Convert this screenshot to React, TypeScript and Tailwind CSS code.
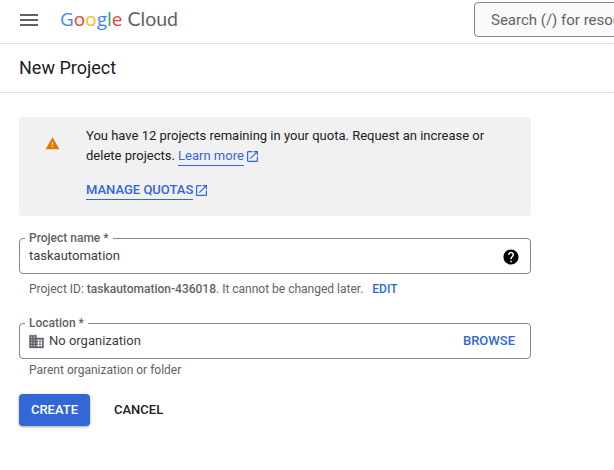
import React from "react";

const Ext = ({ size = 11 }: { size?: number }) => (
  <svg width={size} height={size} viewBox="3 3 18 18" fill="#3367d6" className="shrink-0">
    <path d="M19 19H5V5h7V3H5a2 2 0 0 0-2 2v14a2 2 0 0 0 2 2h14c1.1 0 2-.9 2-2v-7h-2v7zM14 3v2h3.59l-9.83 9.83 1.41 1.41L19 6.41V10h2V3h-7z" />
  </svg>
);

export default function App() {
  return (
    <div className="w-[614px] h-[470px] overflow-hidden bg-white font-['Roboto',sans-serif] text-[#202124]">
      <header className="h-[44px] border-b border-[#e0e0e0] flex items-center overflow-hidden">
        <svg width="24" height="24" viewBox="0 0 24 24" fill="#5f6368" className="ml-[17px] mb-[3px] shrink-0">
          <path d="M3 18h18v-2H3v2zm0-5h18v-2H3v2zm0-7v2h18V6H3z" />
        </svg>
        <div className="ml-[19px] mb-[6px] w-[133px] text-[19px] leading-[28px] font-['Open_Sans',sans-serif] whitespace-nowrap">
          <span className="text-[#4285f4]">G</span>
          <span className="text-[#ea4335]">o</span>
          <span className="text-[#fbbc04]">o</span>
          <span className="text-[#4285f4]">g</span>
          <span className="text-[#34a853]">l</span>
          <span className="text-[#ea4335]">e</span>
          <span className="text-[#5f6368] ml-[5px] text-[19.5px] font-['Lato',sans-serif]">Cloud</span>
        </div>
        <div className="ml-auto mb-[4px] w-[200px] -mr-[60px] h-[35px] shrink-0 rounded-[4px] border border-[#80868b] bg-[#fafafa] pl-[16px] pt-[1px] flex items-center text-[15px] text-[#5f6368] whitespace-nowrap">
          Search (/) for resources
        </div>
      </header>

      <div className="h-[49px] border-b border-[#e0e0e0] pl-[19px] pb-[2px] flex items-center text-[18px] text-[#202124]">
        New Project
      </div>

      <main className="w-[512px] ml-[19px] pt-[24px]">
        <section className="h-[99px] rounded-[4px] bg-[#f1f1f1] flex">
          <svg width="15" height="15" viewBox="0 0 24 24" fill="#e37400" className="ml-[26px] mt-[19px] shrink-0">
            <path d="M1 21h22L12 2 1 21zm12-3h-2v-2h2v2zm0-4h-2v-4h2v4z" />
          </svg>
          <div className="ml-[26px] pt-[9px] text-[13px] leading-[20px] text-[#202124]">
            <p>
              You have 12 projects remaining in your quota. Request an increase or
              <br />
              delete projects.{" "}
              <span className="inline-flex items-center gap-[3px] text-[#3367d6]">
                <span className="border-b border-[#3367d6] leading-[18px]">Learn more</span>
                <Ext />
              </span>
            </p>
            <div className="mt-[15px] flex items-center gap-[3px] text-[13px] font-medium text-[#3367d6]">
              <span className="border-b border-[#3367d6] leading-[18px]">MANAGE QUOTAS</span>
              <Ext />
            </div>
          </div>
        </section>

        <div className="relative mt-[22px] h-[36px] rounded-[4px] border border-[#80868b] pl-[9px] pr-[10px] flex items-center justify-between text-[13px]">
          <span className="absolute left-[5px] -top-[8px] bg-white px-[4px] text-[12px] leading-[14px] font-medium text-[#5f6368]">Project name *</span>
          <span className="text-[#3c4043]">taskautomation</span>
          <svg width="18" height="18" viewBox="0 0 24 24" fill="#000" className="mt-[1px]">
            <path d="M12 2C6.48 2 2 6.48 2 12s4.48 10 10 10 10-4.48 10-10S17.52 2 12 2zm1 17h-2v-2h2v2zm2.07-7.75-.9.92C13.45 12.9 13 13.5 13 15h-2v-.5c0-1.1.45-2.1 1.17-2.83l1.24-1.26c.37-.36.59-.86.59-1.41 0-1.1-.9-2-2-2s-2 .9-2 2H8c0-2.21 1.79-4 4-4s4 1.79 4 4c0 .88-.36 1.68-.93 2.25z" />
          </svg>
        </div>
        <div className="mt-[6px] pl-[10px] h-[18px] flex items-center text-[12px] text-[#5f6368]">
          <span>Project ID: <span className="font-medium">taskautomation-436018</span>. It cannot be changed later.</span>
          <span className="ml-[9px] font-medium text-[#3367d6]">EDIT</span>
        </div>

        <div className="relative mt-[25px] h-[36px] rounded-[4px] border border-[#80868b] pl-[8px] pr-[15px] flex items-center text-[13px]">
          <span className="absolute left-[5px] -top-[8px] bg-white px-[4px] text-[12px] leading-[14px] font-medium text-[#5f6368]">Location *</span>
          <svg width="17" height="17" viewBox="0 0 24 24" fill="#5f6368" stroke="#5f6368" strokeWidth="0.6" className="shrink-0">
            <path d="M12 7V3H2v18h20V7H12zM6 19H4v-2h2v2zm0-4H4v-2h2v2zm0-4H4V9h2v2zm0-4H4V5h2v2zm4 12H8v-2h2v2zm0-4H8v-2h2v2zm0-4H8V9h2v2zm0-4H8V5h2v2zm10 12h-8v-2h2v-2h-2v-2h2v-2h-2V9h8v10zm-2-8h-2v2h2v-2zm0 4h-2v2h2v-2z" />
          </svg>
          <span className="ml-[4px] text-[#3c4043]">No organization</span>
          <span className="ml-auto font-medium text-[#3367d6]">BROWSE</span>
        </div>
        <div className="mt-[2px] pl-[10px] h-[18px] flex items-center text-[12px] text-[#5f6368]">Parent organization or folder</div>

        <div className="mt-[15px] flex items-center">
          <button className="w-[71px] h-[32px] rounded-[4px] bg-[#3367d6] text-white text-[13px] font-medium shadow-[0_1px_3px_rgba(0,0,0,0.35)]">CREATE</button>
          <button className="ml-[24px] text-[13px] font-medium text-[#202124]">CANCEL</button>
        </div>
      </main>
    </div>
  );
}
